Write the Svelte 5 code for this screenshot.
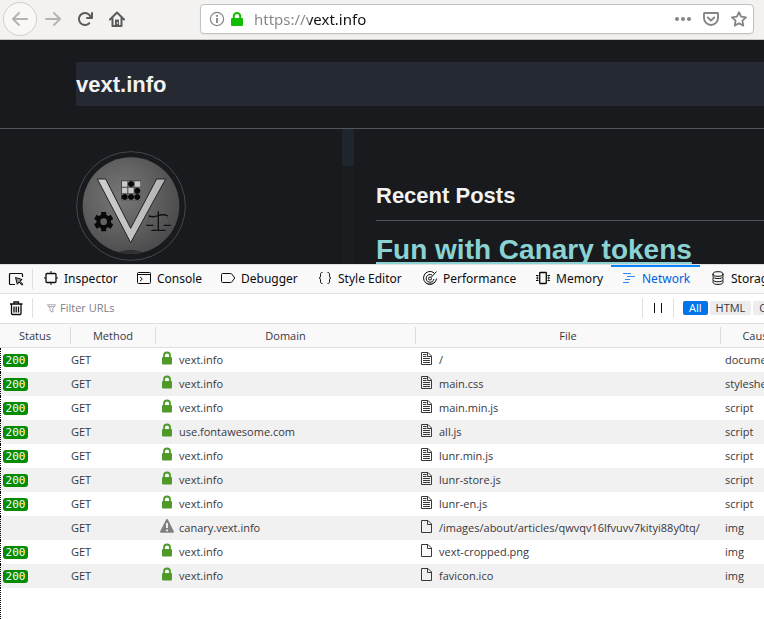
<script>
  const tabs = [
    { name: 'Inspector', icon: 'inspector' },
    { name: 'Console', icon: 'console' },
    { name: 'Debugger', icon: 'debugger' },
    { name: 'Style Editor', icon: 'style' },
    { name: 'Performance', icon: 'performance' },
    { name: 'Memory', icon: 'memory' },
    { name: 'Network', icon: 'network' },
    { name: 'Storage', icon: 'storage' }
  ];
  let active = $state('Network');
  let kind = $state('All');
  let filter = $state('');

  const kinds = ['All', 'HTML', 'CSS'];
  const requests = [
    { status: 200, domain: 'vext.info', file: '/', cause: 'document' },
    { status: 200, domain: 'vext.info', file: 'main.css', cause: 'stylesheet' },
    { status: 200, domain: 'vext.info', file: 'main.min.js', cause: 'script' },
    { status: 200, domain: 'use.fontawesome.com', file: 'all.js', cause: 'script' },
    { status: 200, domain: 'vext.info', file: 'lunr.min.js', cause: 'script' },
    { status: 200, domain: 'vext.info', file: 'lunr-store.js', cause: 'script' },
    { status: 200, domain: 'vext.info', file: 'lunr-en.js', cause: 'script' },
    { status: null, domain: 'canary.vext.info', file: '/images/about/articles/qwvqv16lfvuvv7kityi88y0tq/', cause: 'img' },
    { status: 200, domain: 'vext.info', file: 'vext-cropped.png', cause: 'img' },
    { status: 200, domain: 'vext.info', file: 'favicon.ico', cause: 'img' }
  ];
  let shown = $derived(requests.filter((r) => r.file.includes(filter)));
</script>

{#snippet toolIcon(name)}
  <svg class="icon" viewBox="0 0 16 16" fill="none" stroke="currentColor" aria-hidden="true">
    {#if name === 'inspector'}
      <rect x="3" y="3.5" width="10" height="9" rx="1" stroke-width="1.3" />
      <path d="M8 1v2.500M8 12.500v2.500M1 8h2M13 8h2" stroke-width="1.5" opacity=".65" />
    {:else if name === 'console'}
      <rect x="1.500" y="2.500" width="13" height="11" rx="1" />
      <path d="M1.500 4.500h13M4 6.800l2.300 2.200L4 11.200" />
    {:else if name === 'debugger'}
      <path d="M2.500 3.500h8.300c.4 0 .7.200 1 .5l3 4-3 4c-.3.300-.6.500-1 .5H2.500a1 1 0 0 1-1-1v-7a1 1 0 0 1 1-1z" />
    {:else if name === 'style'}
      <path d="M5.500 2.500c-1.500 0-2 .5-2 1.700v2c0 1-.5 1.800-1.500 1.800 1 0 1.500.800 1.500 1.800v2c0 1.200.5 1.700 2 1.700M10.500 2.500c1.500 0 2 .5 2 1.700v2c0 1 .5 1.800 1.500 1.800-1 0-1.500.800-1.500 1.800v2c0 1.200-.5 1.700-2 1.700" />
    {:else if name === 'performance'}
      <path d="M12 2.800A6.500 6.500 0 1 0 14.500 8.500" />
      <path d="M10 5A3.900 3.900 0 1 0 11.900 9" />
      <path d="M14.500 1.500L9.300 7.200" />
      <circle cx="8" cy="8.500" r="1.500" />
      <path d="M4 13c2.200 1.200 6 1.200 8.500-1.500" opacity=".5" />
    {:else if name === 'memory'}
      <rect x="4.700" y="2.500" width="6.600" height="11" rx=".5" stroke-width="1.300" />
      <path d="M1 5.500h2.500M1 8h2.500M1 10.500h2.500M12.500 5.500H15M12.500 8H15M12.500 10.500H15" />
      <path d="M2.500 5v6M13.500 5v6" opacity=".5" />
    {:else if name === 'network'}
      <path d="M2 3.500h8M6 6.500h8M4 9.500h5M2 12.500h6" stroke-width="1.100" />
    {:else}
      <ellipse cx="8" cy="4" rx="5" ry="2.300" />
      <path d="M3 4v2.300c0 3 10 3 10 0V4M3 7.500v2c0 3 10 3 10 0v-2M3 10.500v1.700c0 3 10 3 10 0v-1.700" />
    {/if}
  </svg>
{/snippet}

<div class="browser">
  <nav class="toolbar" aria-label="Navigation">
    <button class="back" aria-label="Back">
      <svg class="icon" viewBox="0 0 16 16"><path fill="currentColor" d="M15 7H3.414l4.293-4.293a1 1 0 0 0-1.414-1.414l-6 6a1 1 0 0 0 0 1.414l6 6a1 1 0 0 0 1.414-1.414L3.414 9H15a1 1 0 0 0 0-2z" /></svg>
    </button>
    <button class="dim" aria-label="Forward">
      <svg class="icon" viewBox="0 0 16 16"><path fill="currentColor" d="M15.707 7.293l-6-6a1 1 0 0 0-1.414 1.414L12.586 7H1a1 1 0 0 0 0 2h11.586l-4.293 4.293a1 1 0 1 0 1.414 1.414l6-6a1 1 0 0 0 0-1.414z" /></svg>
    </button>
    <button aria-label="Reload">
      <svg class="icon" viewBox="0 0 16 16"><path fill="currentColor" d="M15 1a1 1 0 0 0-1 1v2.418A6.995 6.995 0 1 0 8 15a6.954 6.954 0 0 0 4.950-2.050 1 1 0 0 0-1.414-1.414A5.019 5.019 0 1 1 12.549 6H10a1 1 0 0 0 0 2h5a1 1 0 0 0 1-1V2a1 1 0 0 0-1-1z" /></svg>
    </button>
    <button aria-label="Home">
      <svg class="icon" viewBox="0 0 16 16" fill="none" stroke="currentColor" stroke-width="2" stroke-linejoin="round" stroke-linecap="round"><path d="M1 8.500L8 1.500l7 7M3.500 7.500V15h9V7.500" /><path d="M6 15V9.500c0-.6.400-1 1-1h2c.6 0 1 .4 1 1V15z" fill="currentColor" stroke="none" /><circle cx="8.500" cy="12" r=".8" fill="#fff" stroke="none" /></svg>
    </button>
    <div class="urlbar">
      <svg class="icon info" viewBox="0 0 16 16" fill="none" stroke="currentColor"><circle cx="8" cy="8" r="6.600" stroke-width="1.200" /><path d="M8 7v5M8 4v1.800" stroke-width="1.800" /></svg>
      <svg class="icon" viewBox="0 0 16 16"><rect x="2" y="7" width="12" height="8" rx="1" fill="#12bc00" /><path d="M4.800 8V5.200a3.200 3.200 0 0 1 6.400 0V8" fill="none" stroke="#12bc00" stroke-width="2" /></svg>
      <input class="url" type="text" aria-label="Address" value="https://vext.info" />
      <button aria-label="Page actions"><svg class="icon" viewBox="0 0 16 16" fill="currentColor"><circle cx="2" cy="8" r="2" /><circle cx="8" cy="8" r="2" /><circle cx="14" cy="8" r="2" /></svg></button>
      <button aria-label="Save to Pocket"><svg class="icon" viewBox="0 0 16 16" fill="none" stroke="currentColor" stroke-width="1.900" stroke-linejoin="round" stroke-linecap="round"><path d="M1.500 2h13a.5.500 0 0 1 .5.500V7a7 7 0 0 1-14 0V2.500a.5.500 0 0 1 .5-.5z" /><path d="M4.800 6.500L8 9.600l3.200-3.100" /></svg></button>
      <button aria-label="Bookmark this page"><svg class="icon" viewBox="0 0 16 16" fill="none" stroke="currentColor" stroke-width="1.800" stroke-linejoin="round"><path d="M8 1.200l2.100 4.500 4.900.6-3.600 3.400.9 4.900L8 12.200l-4.300 2.400.9-4.900L1 6.300l4.900-.6z" /></svg></button>
    </div>
  </nav>

  <div class="page">
    <header class="masthead"><a href="/" class="site">vext.info</a></header>
    <div class="content">
      <aside>
        <svg class="logo" viewBox="48 63 330 330" role="img" aria-label="Vext logo">
          <defs>
            <radialGradient id="disc" cx=".4" cy=".4" r=".65"><stop offset="0" stop-color="#777778" /><stop offset=".5" stop-color="#626263" /><stop offset="1" stop-color="#4a4a4c" /></radialGradient>
            <linearGradient id="vee"><stop offset="0" stop-color="#d0d0d0" /><stop offset="1" stop-color="#b4b4b4" /></linearGradient>
          </defs>
          <circle cx="213" cy="228" r="163" fill="none" stroke="#46474d" stroke-width="3" />
          <circle cx="213" cy="227" r="145" fill="url(#disc)" />
          <path d="M174 367q38-15 76 0-38 10-76 0z" fill="#303032" />
          <path d="M112 147h25l75 148 78-148h27L212 338z" fill="url(#vee)" stroke="#222" stroke-width="3" />
          <rect x="183" y="151" width="60" height="60" fill="#454547" />
          <g fill="#c9c9c9"><path d="M186 154h16v16h-16zM205 154h16v16h-16zM224 154h17v16h-17zM186 173h16v17h-16zM205 173h16v17h-16zM224 173h17v17h-17zM186 193h16v16h-16zM205 193h16v16h-16zM224 193h17v16h-17z" /></g>
          <g fill="#080808"><circle cx="213" cy="162" r="9" /><circle cx="232" cy="182" r="9" /><circle cx="194" cy="201" r="9" /><circle cx="213" cy="201" r="9" /><circle cx="232" cy="201" r="9" /></g>
          <g stroke="#090909" fill="none"><circle cx="131" cy="275" r="16" stroke-width="12" /><path d="M131 246v11M131 293v11M106 260.500l10 6M146 283.500l10 6M106 289.500l10-6M146 266.500l10-6" stroke-width="15" /></g>
          <g stroke="#111" fill="none" stroke-width="4"><path d="M295 244v55M266 258q14 5 29-1 14-6 29 1M274 301h43" /><path d="M268 258l-6 27M322 258l6 27" stroke-width="1" opacity=".4" /><path d="M259 286h21M311 286h21" /></g>
        </svg>
        <span class="scrollbar"></span>
      </aside>
      <main>
        <h2>Recent Posts</h2>
        <h1><a href="/fun-with-canary-tokens">Fun with Canary tokens</a></h1>
      </main>
    </div>
  </div>

  <section class="devtools" aria-label="Developer tools">
    <div class="tabbar">
      <button class="picker" aria-label="Pick an element">
        <svg class="icon" viewBox="0 0 16 16" fill="none" stroke="currentColor"><path d="M7 13.500H2.500a1 1 0 0 1-1-1v-9a1 1 0 0 1 1-1h11a1 1 0 0 1 1 1V6" stroke-width="1.200" /><path d="M7.500 6.500l1.800 6.800 1.700-2.300 3 3.200 1-1-3.200-3 2.400-1.700z" fill="#9a9a9b" /></svg>
      </button>
      <div class="tabs" role="tablist">
        {#each tabs as tab}
          <button class="tab" class:active={active === tab.name} role="tab" aria-selected={active === tab.name} onclick={() => (active = tab.name)}>
            {@render toolIcon(tab.icon)}{tab.name}
          </button>
        {/each}
      </div>
    </div>

    <div class="filterbar">
      <button class="trash" aria-label="Clear">
        <svg class="icon" viewBox="0 0 16 16" fill="none" stroke="#0c0c0d" stroke-width="1.300"><path d="M2 4h12.500M6 4V2h4.500v2M3.500 4v9.500a1 1 0 0 0 1 1H12a1 1 0 0 0 1-1V4M6 6.500v6M8.200 6.500v6M10.500 6.500v6" /></svg>
      </button>
      <label class="filter">
        <svg viewBox="0 0 12 12" fill="none" stroke="#a0a0a3" aria-hidden="true"><path d="M1.500 2.500h9L7.500 6.500v4l-3-1.500V6.500zM3 4.500h6" /></svg>
        <input type="text" placeholder="Filter URLs" aria-label="Filter URLs" bind:value={filter} />
      </label>
      <button class="pause" aria-label="Pause recording"><i></i><i></i></button>
      <div class="kinds">
        {#each kinds as k}
          <button class:on={kind === k} onclick={() => (kind = k)}>{k}</button>
        {/each}
      </div>
    </div>

    <div class="requests">
      <table>
        <colgroup><col class="c-status" /><col class="c-method" /><col class="c-domain" /><col /><col class="c-cause" /></colgroup>
        <thead>
          <tr>
            {#each ['Status', 'Method', 'Domain', 'File', 'Cause'] as h}<th scope="col"><span>{h}</span></th>{/each}
          </tr>
        </thead>
        <tbody>
          {#each shown as r}
            <tr>
              <td>{#if r.status}<span class="status">{r.status}</span>{/if}</td>
              <td>GET</td>
              <td>
                <div class="cell">
                  {#if r.status}
                    <svg viewBox="0 0 14 14"><rect x="2" y="6" width="10" height="7.500" rx="1" fill="#4d9a26" /><path d="M4 7V4.500a3 3 0 0 1 6 0V7" fill="none" stroke="#4d9a26" stroke-width="1.800" /></svg>
                  {:else}
                    <svg viewBox="0 0 14 14"><path d="M7 0c.5 0 .8.300 1 .7l5.800 11.500c.4.800 0 1.500-.8 1.500H1c-.8 0-1.200-.7-.8-1.500L6 .7c.2-.4.500-.7 1-.7z" fill="#808080" /><path d="M7 4v5M7 10.500v1.800" stroke="#fff" stroke-width="1.700" /></svg>
                  {/if}
                  {r.domain}
                </div>
              </td>
              <td>
                <div class="cell">
                  <svg viewBox="0 0 14 14" fill="none" stroke="#38383d"><path d="M1.500 1.500h6.500l3.500 3.500v8.500h-10zM7.500 1.500V5.500h4" />{#if r.cause !== 'img'}<path d="M3 3.500h3.500M3 5.500h3.500M3 7.500h7M3 9.500h7M3 11.500h7" />{/if}</svg>
                  {r.file}
                </div>
              </td>
              <td>{r.cause}</td>
            </tr>
          {/each}
        </tbody>
      </table>
    </div>
  </section>
</div>

<style>
  :global(body) { margin: 0; }
  .browser {
    display: flex;
    flex-direction: column;
    height: 100vh;
    overflow: hidden;
    font-family: "Noto Sans", "Open Sans", sans-serif;
  }
  button {
    display: flex;
    align-items: center;
    justify-content: center;
    margin: 0;
    padding: 0;
    border: 0;
    background: none;
    color: inherit;
    font: inherit;
  }
  input { min-width: 0; padding: 0; border: 0; outline: 0; background: none; font: inherit; }
  .icon { flex: none; width: 16px; height: 16px; display: block; }

  .toolbar {
    flex: none;
    display: flex;
    align-items: center;
    box-sizing: border-box;
    height: 40px;
    padding: 0 10px 2px 3px;
    background: #f3f2f1;
    border-bottom: 1px solid #c6c6c6;
    color: #5a5a5a;
  }
  .toolbar > button { width: 32px; height: 32px; }
  .toolbar > .back {
    box-sizing: border-box;
    width: 34px;
    height: 34px;
    border: 1px solid #cfcecd;
    border-radius: 50%;
    background: #f9f8f7;
    color: #b5b4b3;
  }
  .toolbar > .dim { color: #b5b4b3; }
  .urlbar {
    flex: 1;
    display: flex;
    align-items: center;
    gap: 4px;
    box-sizing: border-box;
    height: 30px;
    margin-left: 67px;
    padding: 0 2px 0 8px;
    border: 1px solid #c2c1c0;
    border-radius: 4px;
    background: #fff;
    box-shadow: 0 1px 2px #0000000d;
    color: #858585;
  }
  .urlbar button { width: 24px; height: 24px; }
  .url {
    flex: 1;
    margin-left: 5px;
    font-size: 15px;
    color: #222;
    background: linear-gradient(to right, #858585 55px, #111 55px);
    background-clip: text;
    -webkit-background-clip: text;
    -webkit-text-fill-color: transparent;
  }

  .page {
    flex: 1;
    display: flex;
    flex-direction: column;
    min-height: 0;
    overflow: hidden;
    background: #181a1d;
    color: #f2f2f2;
    font-family: "Liberation Sans", Arial, sans-serif;
  }
  .masthead { flex: none; padding: 22px 0 22px 76px; border-bottom: 1px solid #51555d; }
  .site {
    display: block;
    padding-top: 2px;
    background: #252a32;
    color: #f2f2f2;
    font-size: 22px;
    font-weight: 700;
    line-height: 42px;
    text-decoration: none;
  }
  .content { flex: 1; display: flex; min-height: 0; }
  aside { flex: none; display: flex; justify-content: space-between; width: 278px; padding-left: 76px; }
  .logo { width: 110px; height: 110px; margin-top: 22px; }
  .scrollbar { width: 12px; background: linear-gradient(#1f252c 37px, #1b1c1f 37px); }
  main { flex: 1; padding-left: 22px; }
  h1, h2 { margin: 0; white-space: nowrap; }
  h2 { padding: 50px 0 8px; border-bottom: 1px solid #50545b; font-size: 22px; line-height: 33px; }
  h1 { padding-top: 13px; font-size: 28px; line-height: 32px; }
  h1 a { color: #8bd2d3; text-decoration-thickness: 2px; text-underline-offset: 3px; text-decoration-skip-ink: none; }

  .devtools {
    flex: none;
    display: flex;
    flex-direction: column;
    height: 355px;
    background: #fff;
    color: #38383d;
    font-family: "Open Sans", "Noto Sans", sans-serif;
    font-size: 11px;
  }
  .tabbar {
    flex: none;
    display: flex;
    box-sizing: border-box;
    height: 30px;
    border-top: 1px solid #e0e0e2;
    border-bottom: 1px solid #e0e0e2;
    background: #f9f9fa;
    color: #0c0c0d;
    font-family: "Noto Sans", "Open Sans", sans-serif;
    font-size: 12px;
  }
  .picker, .trash { flex: none; box-sizing: border-box; width: 33px; padding-left: 8px; justify-content: space-between; }
  .picker::after, .trash::after { content: ""; width: 1px; height: 20px; background: #e0e0e2; }
  .tabs { display: grid; grid-template-columns: 93px 84px 97px 105px 113px 86px 89px 89px; }
  .tab { justify-content: flex-start; gap: 5px; padding: 0 0 2px 10px; white-space: nowrap; }
  .active { color: #0060df; box-shadow: inset 0 2px #0a84ff; }
  .active .icon { color: #2f8cf5; }

  .filterbar { flex: none; display: flex; box-sizing: border-box; height: 29px; padding-bottom: 2px; overflow: hidden; }
  .filter { flex: 1; display: flex; align-items: center; gap: 3px; padding-left: 13px; }
  .filter svg { width: 11px; height: 12px; }
  .filter input { flex: 1; color: #38383d; }
  .filter input::placeholder { color: #808084; opacity: 1; }
  .pause { gap: 6px; width: 32px; height: 20px; margin: 4px 0; box-sizing: border-box; border: solid #e0e0e2; border-width: 0 1px; }
  .pause i { width: 1px; height: 10px; background: #0c0c0d; }
  .kinds { display: flex; align-items: center; gap: 2px; width: 81px; padding-left: 9px; }
  .kinds button { flex: none; height: 14px; padding: 0 6px; border-radius: 2px; background: #ededf0; line-height: 14px; }
  .kinds .on { background: #0074e8; color: #fff; }

  .requests { flex: 1; display: flex; flex-direction: column; overflow: hidden; }
  .requests::after { content: ""; flex: 1; border-left: 1px dotted #000; }
  table { width: 100%; min-width: 796px; border-spacing: 0; table-layout: fixed; }
  .c-status { width: 71px; }
  .c-method { width: 85px; }
  .c-domain { width: 260px; }
  .c-cause { width: 75px; }
  th { height: 23px; padding: 0; background: #f9f9fa; border: solid #e0e0e2; border-width: 1px 0; font-weight: 400; }
  th span { display: block; border-right: 1px solid #dcdcde; line-height: 17px; }
  td { height: 24px; padding: 0; line-height: 16px; white-space: nowrap; }
  tbody tr:nth-child(even) { background: #f1f1f1; }
  td:nth-child(1) { padding-left: 2px; border-left: 1px dotted #000; }
  td:nth-child(3), td:nth-child(4), td:nth-child(5) { padding-left: 4px; }
  .cell { display: flex; align-items: center; gap: 5px; }
  .cell svg { flex: none; width: 14px; height: 14px; margin-bottom: 4px; }
  .status {
    display: block;
    width: 25px;
    border-radius: 3px;
    background: #058b00;
    color: #fff;
    font-family: "DejaVu Sans Mono", monospace;
    line-height: 13px;
    text-align: center;
  }
</style>
